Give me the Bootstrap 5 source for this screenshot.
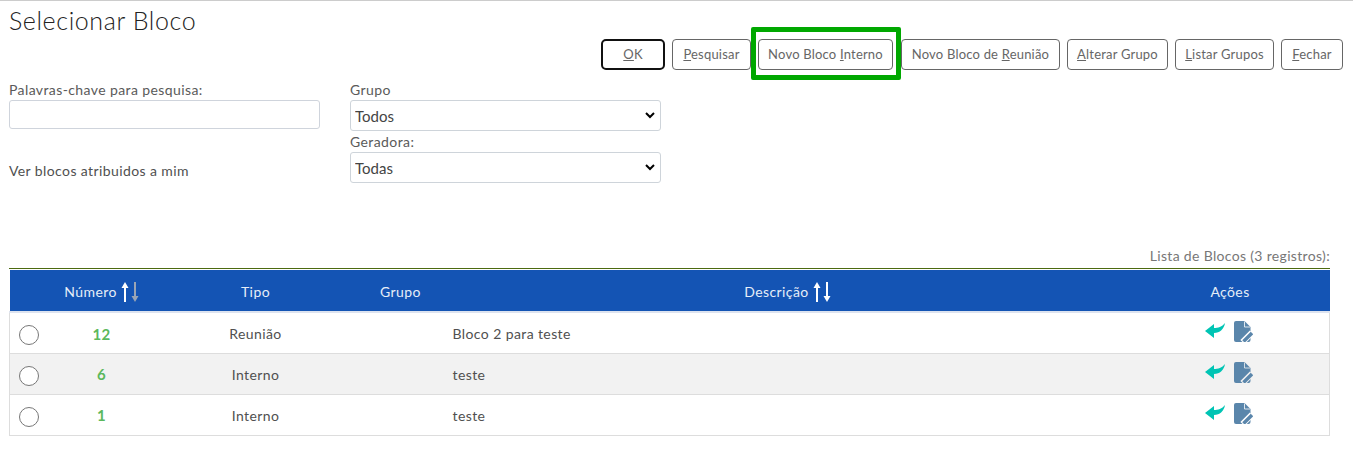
<!DOCTYPE html>
<html lang="pt-BR">
<head>
    <meta charset="UTF-8">
    <meta name="viewport" content="width=device-width, initial-scale=1.0">
    <title>Selecionar Bloco</title>
    <link href="https://cdn.jsdelivr.net/npm/bootstrap@5.3.0/dist/css/bootstrap.min.css" rel="stylesheet">
    <style>
        body {
            font-family: Lato, "Open Sans", sans-serif;
            font-size: 14px;
            letter-spacing: .4px;
            color: #505050;
            background: #fff;
            border-top: 1px solid #ccc;
        }
        .pagina {
            padding: 0 10px 0 9px;
        }
        .titulo {
            font-size: 25px;
            font-weight: 300;
            line-height: 30px;
            margin: 4px 0 0;
            letter-spacing: .6px;
            color: #222;
        }
        .barra {
            height: 31px;
            margin-top: 4px;
            gap: 7px;
        }
        .botao {
            height: 31px;
            padding: 0;
            font-size: 13px;
            line-height: 29px;
            letter-spacing: .2px;
            color: #666;
            background: #fff;
            border: 1px solid #666;
            border-radius: 4px;
        }
        .botao-ok {
            width: 64px;
            border: 2px solid #111;
            border-radius: 5px;
            line-height: 27px;
        }
        .botao-pesq { width: 79px; }
        .botao-interno { width: 135px; }
        .botao-reuniao { width: 159px; }
        .botao-alterar { width: 101px; }
        .botao-listar { width: 99px; }
        .botao-fechar { width: 62px; }
        .destaque {
            position: relative;
            margin-right: 1px;
        }
        .destaque::after {
            content: "";
            position: absolute;
            inset: -12px -8px -10px -7px;
            border: 5px solid #00a800;
            border-radius: 2px;
            pointer-events: none;
        }
        .filtros {
            display: grid;
            grid-template-columns: 311px 311px;
            column-gap: 30px;
            margin-top: 10px;
        }
        .rotulo {
            line-height: 20px;
            margin: 0;
            color: #5a5a5a;
        }
        .campo {
            height: 29px;
            padding: 0 6px;
            border: 1px solid #cfd4dc;
            border-radius: 3px;
            font-size: 14px;
        }
        .lista-sel {
            height: 31px;
            padding: 2px 36px 0 4px;
            border: 1px solid #ced4da;
            border-radius: 3px;
            font-size: 15px;
            color: #444;
            margin-bottom: 1px;
            background-image: url("data:image/svg+xml,%3csvg xmlns='http://www.w3.org/2000/svg' viewBox='0 0 10 7'%3e%3cpath fill='none' stroke='%23000' stroke-width='2' d='M1 1l4 4 4-4'/%3e%3c/svg%3e");
            background-position: right 5px center;
            background-size: 10px 7px;
        }
        .lista-sel:last-child {
            margin-bottom: 0;
        }
        .ver-blocos {
            margin-top: 32px;
            line-height: 20px;
        }
        .legenda {
            margin: 63px 13px 0 0;
            text-align: right;
            line-height: 20px;
            letter-spacing: .33px;
            color: #777;
        }
        .linha-verde {
            margin-right: 13px;
            margin-top: 2px;
            height: 1px;
            background: #4c6a10;
        }
        .tabela-blocos {
            table-layout: fixed;
            width: 1320px;
            margin: 1px 0 0;
            font-size: 14px;
            border-collapse: collapse;
        }
        .tabela-blocos thead th {
            height: 42px;
            background: #1454b4;
            color: #e6eef8;
            font-weight: 400;
            text-align: center;
            vertical-align: middle;
            padding: 2px 0 0;
            border-bottom: 2px solid #dde3ef;
            box-shadow: none;
        }
        .tabela-blocos tbody td {
            height: 41px;
            padding: 2px 0 0;
            vertical-align: middle;
            text-align: center;
            color: #505050;
            border-bottom: 1px solid #ddd;
            box-shadow: none;
        }
        .tabela-blocos tbody tr:nth-child(even) td {
            background: #f2f2f2;
        }
        .tabela-blocos tbody td:first-child {
            border-left: 1px solid #ddd;
        }
        .tabela-blocos tbody td:last-child {
            border-right: 1px solid #ddd;
        }
        .tabela-blocos tbody td.descricao {
            text-align: left;
            padding-left: 8px;
        }
        .tabela-blocos tbody td.numero {
            color: #5cb85c;
            font-weight: 700;
            font-size: 15px;
        }
        .col-sel { width: 39px; }
        .col-num { width: 106px; }
        .col-tipo { width: 202px; }
        .col-grupo { width: 88px; }
        .col-desc { width: 686px; }
        .col-acoes { width: 199px; }
        .radio-bloco {
            width: 20px;
            height: 20px;
            margin: 2px 0 0 0;
            border: 1px solid #777;
            float: none;
        }
        .setas {
            display: inline-block;
            vertical-align: -5px;
        }
        .acoes {
            gap: 9px;
            margin-top: -4px;
            padding-right: 2px;
        }
        .icone-voltar {
            margin-top: -1px;
        }
    </style>
</head>
<body>
    <div class="pagina">
        <h1 class="titulo">Selecionar Bloco</h1>

        <div class="barra d-flex justify-content-end">
            <button class="botao botao-ok" type="button"><u>O</u>K</button>
            <button class="botao botao-pesq" type="button"><u>P</u>esquisar</button>
            <span class="destaque d-flex"><button class="botao botao-interno" type="button">Novo Bloco <u>I</u>nterno</button></span>
            <button class="botao botao-reuniao" type="button">Novo Bloco de <u>R</u>eunião</button>
            <button class="botao botao-alterar" type="button"><u>A</u>lterar Grupo</button>
            <button class="botao botao-listar" type="button"><u>L</u>istar Grupos</button>
            <button class="botao botao-fechar" type="button"><u>F</u>echar</button>
        </div>

        <div class="filtros">
            <div>
                <p class="rotulo">Palavras-chave para pesquisa:</p>
                <input class="form-control campo" type="text">
                <div class="ver-blocos">Ver blocos atribuidos a mim</div>
            </div>
            <div>
                <p class="rotulo">Grupo</p>
                <select class="form-select lista-sel"><option>Todos</option></select>
                <p class="rotulo">Geradora:</p>
                <select class="form-select lista-sel"><option>Todas</option></select>
            </div>
        </div>

        <p class="legenda">Lista de Blocos (3 registros):</p>
        <div class="linha-verde"></div>

        <table class="table tabela-blocos">
            <colgroup>
                <col class="col-sel"><col class="col-num"><col class="col-tipo"><col class="col-grupo"><col class="col-desc"><col class="col-acoes">
            </colgroup>
            <thead>
                <tr>
                    <th></th>
                    <th>Número
                        <svg class="setas" width="18" height="20" viewBox="0 0 18 20"><path d="M4 20V5" stroke="#fff" stroke-width="2"/><path d="M4 0l3.500 6h-7z" fill="#fff"/><path d="M14 0v15" stroke="#9aa5b5" stroke-width="2"/><path d="M14 20l3.500-6h-7z" fill="#9aa5b5"/></svg>
                    </th>
                    <th>Tipo</th>
                    <th>Grupo</th>
                    <th>Descrição
                        <svg class="setas" width="18" height="20" viewBox="0 0 18 20"><path d="M4 20V5" stroke="#fff" stroke-width="2"/><path d="M4 0l3.500 6h-7z" fill="#fff"/><path d="M14 0v15" stroke="#fff" stroke-width="2"/><path d="M14 20l3.500-6h-7z" fill="#fff"/></svg>
                    </th>
                    <th>Ações</th>
                </tr>
            </thead>
            <tbody>
                <tr>
                    <td><input class="form-check-input radio-bloco" type="radio" name="bloco"></td>
                    <td class="numero">12</td>
                    <td>Reunião</td>
                    <td></td>
                    <td class="descricao">Bloco 2 para teste</td>
                    <td><div class="acoes d-flex justify-content-center align-items-center">
                        <svg class="icone-voltar" width="20" height="16" viewBox="0 0 20 16"><path d="M0 8L9 1v4c4 0 8-1 11-5-1 6-5 10-11 10v5z" fill="#00c4b4"/></svg>
                        <svg width="19" height="21" viewBox="0 0 19 21"><path d="M2 0h8.500L16.500 6v13a2 2 0 0 1-2 2H2a2 2 0 0 1-2-2V2a2 2 0 0 1 2-2z" fill="#5a86ab"/><path d="M10.500 .5V6h5.500" fill="none" stroke="#fff" stroke-width=".8"/><path d="M8.500 21l9.500-9.500" stroke="#fff" stroke-width="6"/><path d="M9.500 20.500l8.500-8.500" stroke="#5a86ab" stroke-width="3.500"/></svg>
                    </div></td>
                </tr>
                <tr>
                    <td><input class="form-check-input radio-bloco" type="radio" name="bloco"></td>
                    <td class="numero">6</td>
                    <td>Interno</td>
                    <td></td>
                    <td class="descricao">teste</td>
                    <td><div class="acoes d-flex justify-content-center align-items-center">
                        <svg class="icone-voltar" width="20" height="16" viewBox="0 0 20 16"><path d="M0 8L9 1v4c4 0 8-1 11-5-1 6-5 10-11 10v5z" fill="#00c4b4"/></svg>
                        <svg width="19" height="21" viewBox="0 0 19 21"><path d="M2 0h8.500L16.500 6v13a2 2 0 0 1-2 2H2a2 2 0 0 1-2-2V2a2 2 0 0 1 2-2z" fill="#5a86ab"/><path d="M10.500 .5V6h5.500" fill="none" stroke="#f2f2f2" stroke-width=".8"/><path d="M8.500 21l9.500-9.500" stroke="#f2f2f2" stroke-width="6"/><path d="M9.500 20.500l8.500-8.500" stroke="#5a86ab" stroke-width="3.500"/></svg>
                    </div></td>
                </tr>
                <tr>
                    <td><input class="form-check-input radio-bloco" type="radio" name="bloco"></td>
                    <td class="numero">1</td>
                    <td>Interno</td>
                    <td></td>
                    <td class="descricao">teste</td>
                    <td><div class="acoes d-flex justify-content-center align-items-center">
                        <svg class="icone-voltar" width="20" height="16" viewBox="0 0 20 16"><path d="M0 8L9 1v4c4 0 8-1 11-5-1 6-5 10-11 10v5z" fill="#00c4b4"/></svg>
                        <svg width="19" height="21" viewBox="0 0 19 21"><path d="M2 0h8.500L16.500 6v13a2 2 0 0 1-2 2H2a2 2 0 0 1-2-2V2a2 2 0 0 1 2-2z" fill="#5a86ab"/><path d="M10.500 .5V6h5.500" fill="none" stroke="#fff" stroke-width=".8"/><path d="M8.500 21l9.500-9.500" stroke="#fff" stroke-width="6"/><path d="M9.500 20.500l8.500-8.500" stroke="#5a86ab" stroke-width="3.500"/></svg>
                    </div></td>
                </tr>
            </tbody>
        </table>
    </div>
    <script src="https://cdn.jsdelivr.net/npm/bootstrap@5.3.0/dist/js/bootstrap.bundle.min.js"></script>
</body>
</html>
